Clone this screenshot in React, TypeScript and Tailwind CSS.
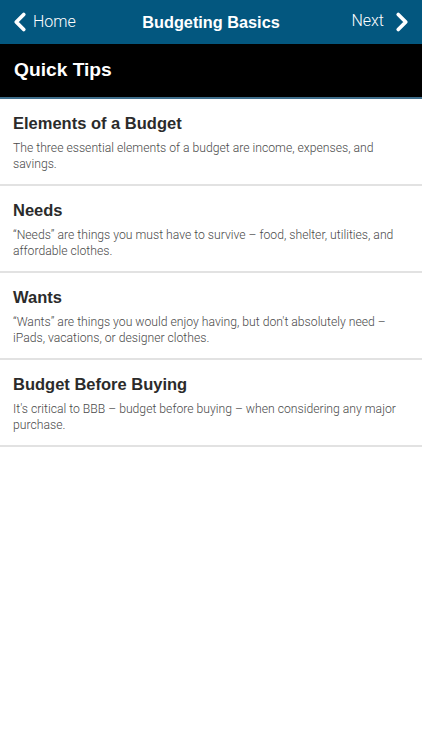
import { ChevronLeft, ChevronRight } from "lucide-react"

const tips = [
  {
    title: "Elements of a Budget",
    body: "The three essential elements of a budget are income, expenses, and savings.",
  },
  {
    title: "Needs",
    body: "\u201cNeeds\u201d are things you must have to survive \u2013 food, shelter, utilities, and affordable clothes.",
  },
  {
    title: "Wants",
    body: "\u201cWants\u201d are things you would enjoy having, but don't absolutely need \u2013 iPads, vacations, or designer clothes.",
  },
  {
    title: "Budget Before Buying",
    body: "It's critical to BBB \u2013 budget before buying \u2013 when considering any major purchase.",
  },
]

export default function App() {
  return (
    <div className="w-[422px] h-[750px] bg-white font-['Liberation_Sans',Arial,sans-serif] text-[#333]">
      {/* Nav bar */}
      <div className="h-[44px] bg-[#03577f] flex items-center justify-between px-[9px] text-white">
        <div className="flex items-center w-[100px]">
          <ChevronLeft size={30} strokeWidth={3} className="-ml-[4px]" />
          <span className="font-['Roboto',sans-serif] font-light text-[16px] -ml-[2px]">Home</span>
        </div>
        <span className="text-[16.3px] font-bold">Budgeting Basics</span>
        <div className="flex items-center justify-end gap-[3px] w-[100px]">
          <span className="font-['Roboto',sans-serif] font-light text-[16px] -mt-[2px]">Next</span>
          <ChevronRight size={30} strokeWidth={3} className="-mr-[4px]" />
        </div>
      </div>

      {/* Section header */}
      <div className="h-[55px] bg-black flex items-center px-[14px] border-b-2 border-[#3f6f8c]">
        <span className="text-white text-[19.2px] font-bold">Quick Tips</span>
      </div>

      {tips.map((t) => (
        <div key={t.title} className="h-[87px] border-b-2 border-[#e2e2e2] px-[13px] pt-[14px]">
          <h3 className="text-[16.5px] font-bold text-[#2b2b2b] leading-[20px]">{t.title}</h3>
          <p className="mt-[8px] font-['Roboto',sans-serif] font-light text-[12.2px] leading-[15.5px] text-[#4a4a4a]">
            {t.body}
          </p>
        </div>
      ))}
    </div>
  )
}
